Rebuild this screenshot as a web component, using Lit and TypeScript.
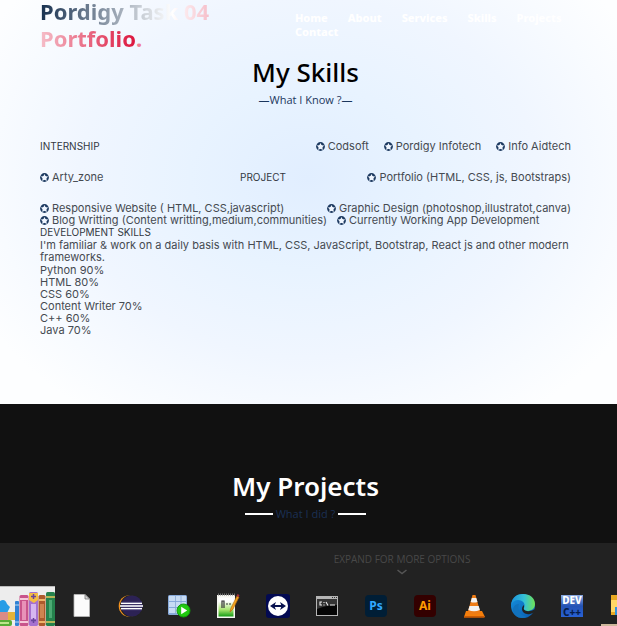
import { LitElement, html, svg, css } from "lit";
import { customElement } from "lit/decorators.js";

const star = html`<svg class="star" viewBox="0 0 16 16" aria-hidden="true">
  <circle cx="8" cy="8" r="7.800" fill="#1d3a61" />
  <path fill="#f0f6ff" d="M8 1.600l2 4 4.600.5-3.300 3.200.9 4.700L8 11.800l-4.200 2.200.9-4.700-3.300-3.200 4.600-.5z" />
  <circle cx="8" cy="8.300" r="3.500" fill="#f0f6ff" />
</svg>`;

const icons = [
  { name: "File", art: svg`
    <path d="M7 3.500h11l4.500 4.500v17.500H7z" fill="#fbfbfb" stroke="#b9b9b9" stroke-width=".8"/>
    <path d="M18 3.500v4.500h4.500z" fill="#d5d5d5" stroke="#777" stroke-width=".8"/>` },
  { name: "Eclipse", art: svg`
    <circle cx="13.500" cy="15" r="10.800" fill="#f7941e"/><circle cx="15" cy="15" r="11" fill="#222"/>
    <circle cx="16" cy="15" r="10.600" fill="#2c2255"/>
    <path d="M5 12h21M5 15h22M5 18h21" stroke="#4a4279" stroke-width="2.500"/>
    <path d="M5 12.300h21M4 15h23M5 17.700h21" stroke="#fff" stroke-width="1.300"/>` },
  { name: "Server", art: svg`
    <rect x="3" y="4" width="19" height="20" rx="1.5" fill="#88aada"/>
    <path d="M4 5h17v5H4zM4 11h17v5H4zM4 17h17v5H4z" fill="#c7dbf3"/>
    <path d="M10.5 5v18M16 5v18" stroke="#86a7d3" stroke-width=".8"/>
    <circle cx="18.5" cy="19.5" r="6.5" fill="#20c810" stroke="#119b08"/>
    <path d="M16.2 15.8v7.4l6-3.7z" fill="#fff"/>` },
  { name: "Editor", art: svg`
    <defs><linearGradient id="gr" x2="0" y2="1"><stop offset=".2" stop-color="#fff"/><stop offset=".65" stop-color="#a6e36c"/><stop offset="1" stop-color="#159c16"/></linearGradient></defs>
    <path d="M3 4h18v23H3z" fill="#f7f7f2"/><path d="M4.5 6.5h15v19h-15z" fill="url(#gr)"/>
    <path d="M4 3.5h17" stroke="#777" stroke-width="2" stroke-dasharray="1 1"/>
    <path d="M8 17v-7h2v7M12 13h2M15 13h2" fill="none" stroke="#333" stroke-width="1.2"/>
    <path d="M16 21l1-4 6-12 2 1-6 12z" fill="#f3a51d" stroke="#bb6d13" stroke-width=".7"/><path d="M22.500 5l1-2 2 1-.8 2z" fill="#a43138"/>` },
  { name: "TeamViewer", art: svg`
    <rect x="3" y="3" width="24" height="24" rx="3" fill="#030a52"/>
    <circle cx="15" cy="15" r="10" fill="#fff"/>
    <path d="M7 15l6-4-1.200 3h6.400l-1.200-3 6 4-6 4 1.200-3h-6.400l1.200 3z" fill="#07104f"/>` },
  { name: "Command Prompt", art: svg`
    <rect x="4" y="5" width="22" height="20" fill="#b5b5b5"/><path d="M5 8h20v16H5z" fill="#050505"/>
    <path d="M5 8h20v6q-10 0-20 4z" fill="#343434"/>
    <path d="M20 6.5h1M22 6.5h1M24 6.5h1" stroke="#333"/>
    <path d="M10 11H8v3h2M12 11v1M12 13.5v1M14 11l2 3.5M18 14h5" fill="none" stroke="#eee" stroke-width="1.1"/>` },
  { name: "Photoshop", art: svg`
    <rect x="4" y="4" width="22" height="22" rx="4" fill="#001e36"/>
    <text class="adobe" x="15" y="19" text-anchor="middle" fill="#31a8ff">Ps</text>` },
  { name: "Illustrator", art: svg`
    <rect x="4" y="4" width="22" height="22" rx="4" fill="#330000"/>
    <text class="adobe" x="15" y="19" text-anchor="middle" fill="#ff9a00">Ai</text>` },
  { name: "VLC", art: svg`
    <path d="M7 20h16l3 6H5z" fill="#f57f0b"/><path d="M5 25h20.500v1.800H5z" fill="#c85a05"/>
    <path d="M13.500 4h3l5 18q-6.500 3-13 0z" fill="#ee7c16"/>
    <path d="M12.800 7h4.500l1.200 4q-3.500 1.200-6.800 0zM10.500 15h9.200l1.200 4q-6 2.600-11.600 0z" fill="#f2f2f2"/>` },
  { name: "Edge", art: svg`
    <defs><linearGradient id="e1" x1="0" x2="1"><stop stop-color="#1b91db"/><stop offset=".55" stop-color="#35c1d7"/><stop offset="1" stop-color="#6fe254"/></linearGradient>
    <linearGradient id="e2" x1="0" x2="1" y2="1"><stop stop-color="#1691df"/><stop offset="1" stop-color="#0859ad"/></linearGradient></defs>
    <circle cx="15" cy="15" r="12" fill="url(#e2)"/>
    <path d="M3 14C4 6 9 3 15 3c7 0 12 4 12 10 0 5-4 7-8 7-3 0-4-1-3-3 2-4-1-8-6-8-3 0-6 2-7 5z" fill="url(#e1)"/>
    <path d="M11 13c-2 5 1 12 8 13-7 3-14-1-14-7 0-3 2-6 6-6z" fill="#1172bd"/>
    <path d="M16 14c-3 2-3 8 3 9 3 .6 5-.3 7-2l1-3c-3 2-6 2.500-8 2-3-.6-4-2-3-4z" fill="#222"/>` },
  { name: "Dev-C++", art: svg`
    <defs><linearGradient id="dv" x2="0" y2="1"><stop stop-color="#8aa9e0"/><stop offset=".5" stop-color="#2453b4"/><stop offset="1" stop-color="#2861d5"/></linearGradient></defs>
    <rect x="4" y="4" width="22" height="22" fill="url(#dv)"/>
    <text class="dev" x="15" y="13" text-anchor="middle" fill="#fff">DEV</text>
    <text class="dev" x="15" y="25" text-anchor="middle" fill="#061c49">C++</text>` },
  { name: "File Explorer", art: svg`
    <path d="M5 5h9l3 3h12v17H5z" fill="#e9a822"/><path d="M5 10h24v12H5z" fill="#ffd766"/>
    <path d="M9 17h20v8H9z" fill="#2f91df"/>` },
];

@customElement("app-root")
export class AppRoot extends LitElement {
  static styles = css`
    :host { display: flex; flex-direction: column; min-height: 100vh; overflow: hidden;
      font: 400 11px/12px Inter, sans-serif; color: #454a51; }
    * { box-sizing: border-box; margin: 0; }
    ul { list-style: none; padding: 0; }
    .skills { padding: 0 46px 67px 40px;
      background: radial-gradient(ellipse 60% 72% at 50% 44%, #e1eeff 0%, #e8f3ff 32%, #f0f6ff 62%, #f8fbff 85%, #fdfeff 100%); }
    header { display: grid; grid-template-columns: 48fr 52fr; height: 54px; }
    .logo { font: 700 22px/27px "Noto Sans", sans-serif; text-decoration: none; margin-top: -2px; }
    .grad { color: transparent; background: linear-gradient(90deg, #17304f, #fff 50%, #dc143c); background-clip: text; -webkit-background-clip: text; }
    .dot { color: #ef7d95; }
    nav { display: flex; flex-wrap: wrap; align-content: flex-start; gap: 0 20px; padding-top: 11px; }
    nav a { font: 800 11px/14px "Noto Sans", sans-serif; color: #fff; text-decoration: none; }
    h2 { text-align: center; font: 500 26px/36px "Noto Sans", sans-serif; color: #000; }
    .sub { font: 400 11px/20px "Open Sans", sans-serif; color: #1b365d; text-align: center; }
    .row { display: flex; justify-content: space-between; height: 31px; }
    .rows { padding-top: 30px; }
    .row.last { height: 12px; }
    .group { display: flex; gap: 15px; }
    .group.near { gap: 10px; }
    .item { display: flex; align-items: center; gap: 3px; height: 12px; white-space: nowrap; }
    .star { width: 9px; height: 9px; flex: none; }
    h3 { font: inherit; font-size: 10px; color: #33383f; }
    .row.split { display: grid; grid-template-columns: 200px 1fr auto; }
    .dev-title { margin-bottom: 1px; }
    .levels { padding: 1px 0; }
    .projects { flex: 1; background: #111; padding: 64px 46px 16px 40px; }
    .projects h2 { color: #fff; font-weight: 600; }
    .projects .sub { display: flex; align-items: center; justify-content: center; gap: 3px; color: #1b3054; }
    .line { width: 28px; height: 2px; background: #fff; }
    footer { background: #222; }
    .expand { display: flex; flex-direction: column; align-items: center; margin: 0 auto; padding: 8px 0 0; border: 0; background: none;
      font: 400 10px/16px "Open Sans", sans-serif; color: #484848; width: max-content; }
    .more { padding-left: 187px; height: 43px; }
    .chevron { width: 10px; height: 6px; margin-top: 2px; }
    .bar { display: flex; height: 40px; }
    .books { width: 55px; height: 40px; flex: none; margin-right: 2px; }
    .task { width: 49px; height: 40px; flex: none; padding: 0; border: 0; background: none; display: grid; place-items: center; }
    .task svg { width: 30px; height: 30px; display: block; }
    .task.active { border-bottom: 2px solid #cdb79b; margin-left: 5px; padding-right: 10px; }
    .adobe { font: 700 12px "Noto Sans", sans-serif; }
    .dev { font: 800 10px "Noto Sans", sans-serif; }
  `;

  private item(t: string) {
    return html`<li class="item">${star}${t}</li>`;
  }

  render() {
    return html`
      <section class="skills">
        <header>
          <a class="logo" href="#home"><span class="grad">Pordigy Task 04<br />Portfolio</span><span class="dot">.</span></a>
          <nav>${["Home", "About", "Services", "Skills", "Projects", "Contact"].map((n) => html`<a href="#${n.toLowerCase()}">${n}</a>`)}</nav>
        </header>
        <h2>My Skills</h2>
        <p class="sub">—What I Know ?—</p>
        <div class="rows">
          <div class="row"><h3>INTERNSHIP</h3><ul class="group">${["Codsoft", "Pordigy Infotech", "Info Aidtech"].map(this.item)}</ul></div>
          <div class="row split"><ul>${this.item("Arty_zone")}</ul><h3>PROJECT</h3><ul>${this.item("Portfolio (HTML, CSS, js, Bootstraps)")}</ul></div>
          <ul class="row last">${["Responsive Website ( HTML, CSS,javascript)", "Graphic Design (photoshop,illustratot,canva)"].map(this.item)}</ul>
          <ul class="group near">${["Blog Writting (Content writting,medium,communities)", "Currently Working App Development"].map(this.item)}</ul>
        </div>
        <h3 class="dev-title">DEVELOPMENT SKILLS</h3>
        <p>I'm familiar &amp; work on a daily basis with HTML, CSS, JavaScript, Bootstrap, React js and other modern frameworks.</p>
        <ul class="levels">${["Python 90%", "HTML 80%", "CSS 60%", "Content Writer 70%", "C++ 60%", "Java 70%"].map((s) => html`<li>${s}</li>`)}</ul>
      </section>
      <section class="projects">
        <h2>My Projects</h2>
        <p class="sub"><span class="line"></span>What I did ?<span class="line"></span></p>
      </section>
      <footer>
        <div class="more"><button class="expand">EXPAND FOR MORE OPTIONS
          <svg class="chevron" viewBox="0 0 10 6" aria-hidden="true"><path d="M.5 1l4.500 3.500L9.500 1" fill="none" stroke="#555" stroke-width="1.500"/></svg></button></div>
        <div class="bar">
          <svg class="books" viewBox="0 0 55 40" role="img" aria-label="Books">
            <path d="M0 0h55v40H0z" fill="#ededed"/><path d="M0 0h55v1H0z" fill="#bbb"/>
            <path d="M0 15q5-3 7 3l3 3-3 6H0z" fill="#279de6"/>
            <rect x="-3" y="26" width="13" height="8" rx="3" fill="#d98b87"/><path d="M8 26h7v8H8z" fill="#e6b339"/>
            <rect x="-3" y="34" width="15" height="6" rx="2" fill="#56ad34"/><path d="M0 36h9v2H0z" fill="#bce58a"/>
            <rect x="15" y="15" width="4" height="25" rx="1" fill="#3182d4"/><path d="M15 19h4M15 36h4" stroke="#b9dcf4"/>
            <rect x="19.500" y="9" width="9" height="31" rx="1.500" fill="#c9548b"/><path d="M22 15h4v19h-4z" fill="#e892b8"/><path d="M20 13h8M20 36h8" stroke="#f5c9d9" stroke-width="2"/>
            <rect x="29" y="6" width="9" height="34" rx="1.500" fill="#a671cf"/><path d="M29 7h9v7l-4 3-5-3z" fill="#f4bd42"/><path d="M31 18h5v15h-5z" fill="#d6b6f0"/><path d="M33.500 8v5M31 10.500h5M33.500 32v5M31 34.500h5" stroke="#68439b" stroke-width="1.500"/>
            <rect x="38.500" y="9" width="7" height="31" rx="1.500" fill="#ad5a2c"/><path d="M40 18h4v14h-4z" fill="#ce8450"/><path d="M39 14h6M39 36h6" stroke="#efb36a" stroke-width="2"/>
            <rect x="46" y="6" width="9" height="34" rx="1.500" fill="#25824d"/><path d="M49 14h3v18h-3z" fill="#4ca973"/><path d="M46 11h9M46 36h9" stroke="#e5c75e" stroke-width="1.500"/>
          </svg>
          ${icons.map((i) => html`<button class="task ${i.name === "File Explorer" ? "active" : ""}" aria-label=${i.name}><svg viewBox="0 0 30 30" aria-hidden="true">${i.art}</svg></button>`)}
        </div>
      </footer>`;
  }
}
